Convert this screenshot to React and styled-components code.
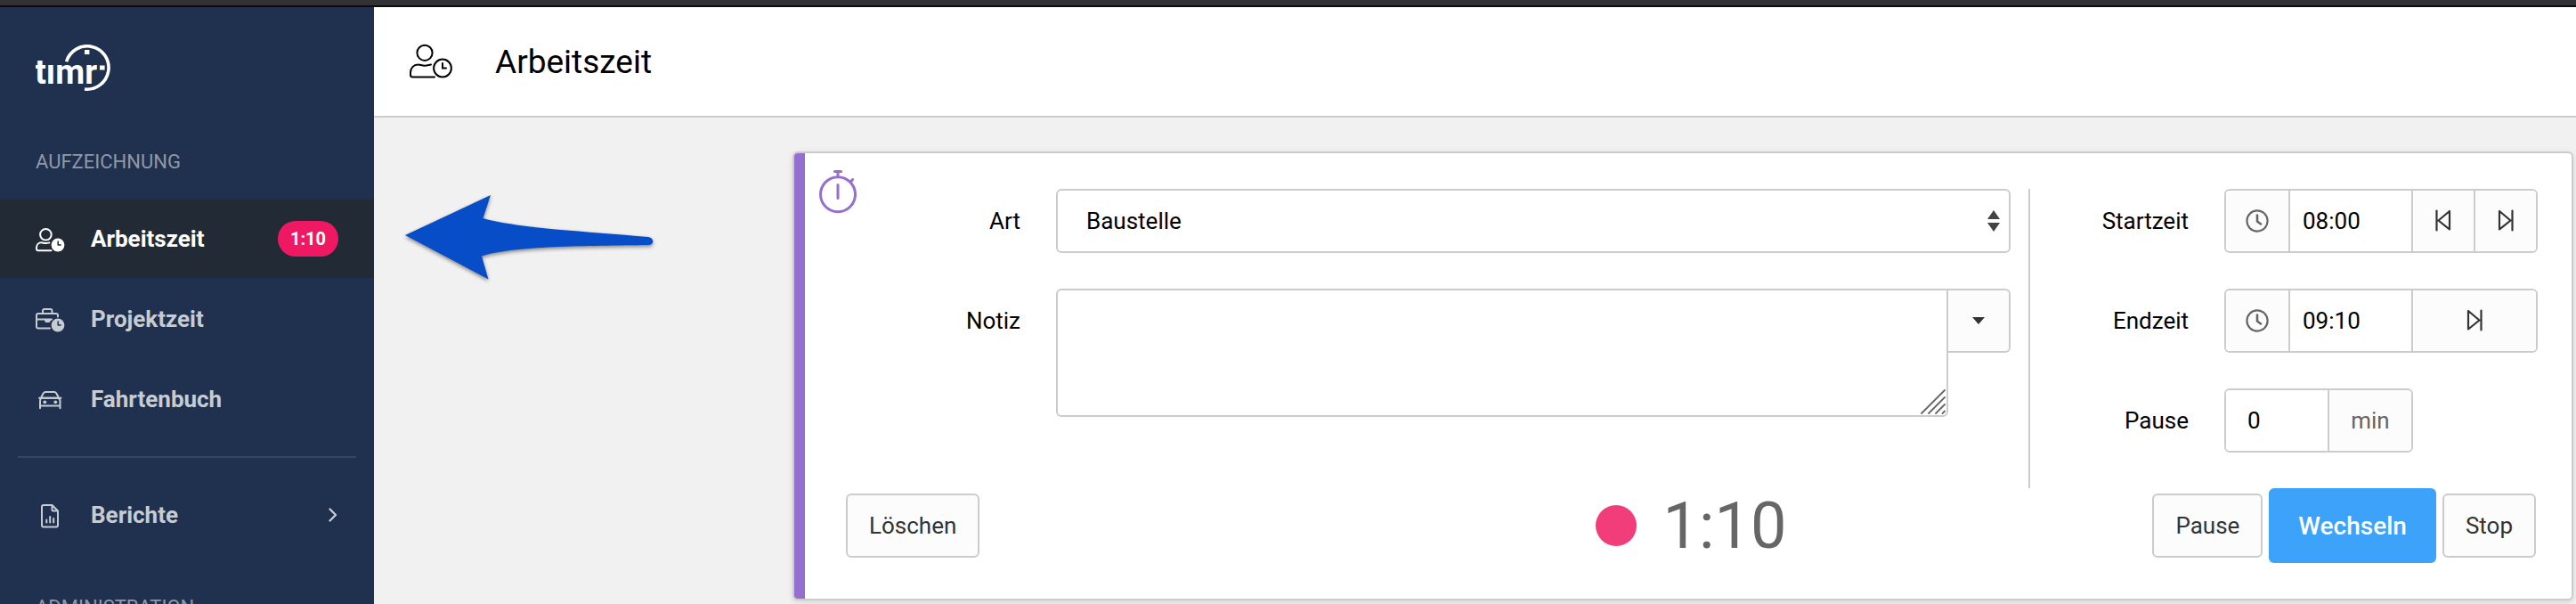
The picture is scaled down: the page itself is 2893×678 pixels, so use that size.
import React, { useState } from 'react';
import styled, { createGlobalStyle } from 'styled-components';

const GlobalStyle = createGlobalStyle`
  * {
    box-sizing: border-box;
  }
  body {
    margin: 0;
    font-family: Roboto, sans-serif;
    font-size: 26px;
    color: #000;
    background: #f1f1f1;
  }
  button, input, select, textarea {
    font: inherit;
    margin: 0;
  }
  svg {
    display: block;
    flex: none;
  }
`;

const Shell = styled.div`
  display: flex;
  flex-direction: column;
  height: 100vh;
  overflow: hidden;
`;

const TopBar = styled.div`
  flex: none;
  height: 8px;
  background: #323234;
  border-bottom: 2px solid #0b0b0c;
`;

const Columns = styled.div`
  display: flex;
  flex: 1;
  min-height: 0;
`;

/* sidebar */

const Sidebar = styled.nav`
  flex: none;
  width: 420px;
  padding-top: 42px;
  overflow: hidden;
  background: #1f314f;
`;

const LogoLink = styled.a`
  display: block;
  margin: 0 40px 20px;
`;

const LogoText = styled.text`
  font-family: Roboto, sans-serif;
  font-size: 38px;
  font-weight: 700;
  fill: #fff;
`;

const SectionTitle = styled.h2`
  margin: 0;
  padding: 47px 40px 29px;
  font-size: 22px;
  line-height: 26px;
  font-weight: 400;
  color: #8f98a7;
`;

const Menu = styled.ul`
  display: flex;
  flex-direction: column;
  gap: 2px;
  margin: 0;
  padding: 0;
  list-style: none;
`;

const MenuLink = styled.a`
  display: flex;
  align-items: center;
  height: 88px;
  padding: 0 40px;
  font-weight: 700;
  text-decoration: none;
  color: ${props => (props.$active ? '#fff' : '#c7cbd2')};
  background: ${props => (props.$active ? '#222b35' : 'transparent')};
`;

const MenuText = styled.span`
  flex: 1;
  margin-left: 29px;
`;

const Badge = styled.span`
  width: 68px;
  border-radius: 20px;
  background: #ef1862;
  color: #fff;
  font-size: 20px;
  line-height: 40px;
  text-align: center;
`;

const Separator = styled.hr`
  height: 2px;
  margin: 20px;
  border: 0;
  background: #364860;
`;

/* main area */

const Main = styled.main`
  flex: 1;
  min-width: 0;
`;

const Header = styled.header`
  display: flex;
  align-items: center;
  gap: 48px;
  height: 124px;
  padding: 0 40px;
  background: #fff;
  border-bottom: 2px solid #ccc;
`;

const Title = styled.h1`
  margin: 0;
  font-size: 37px;
  font-weight: 400;
`;

const Content = styled.div`
  position: relative;
  padding: 38px 3px 0 470px;
`;

const Arrow = styled.svg`
  position: absolute;
  left: 30px;
  top: 80px;
  filter: drop-shadow(0 2px 2px rgba(0, 0, 0, 0.45));
`;

const Card = styled.form`
  display: flex;
  overflow: hidden;
  border: 2px solid #ccc;
  border-radius: 6px;
  background: #fff;
  box-shadow: 0 2px 6px rgba(0, 0, 0, 0.12);
`;

const Stripe = styled.div`
  flex: none;
  width: 12px;
  background: #956fd0;
`;

const CardBody = styled.div`
  flex: 1;
  min-width: 0;
  padding: 18px 38px 40px 0;
`;

const Fields = styled.div`
  display: flex;
`;

const CardIcon = styled.div`
  width: 58px;
  padding-left: 14px;
`;

const FieldColumn = styled.div`
  display: grid;
  grid-template-columns: ${props => props.$columns};
  column-gap: 40px;
  row-gap: 40px;
  align-content: start;
  flex: ${props => (props.$grow ? 1 : 'none')};
  margin-top: 22px;
  padding-right: ${props => (props.$grow ? '20px' : 0)};
  padding-bottom: 40px;
  border-right: ${props => (props.$grow ? '2px solid #ccc' : 0)};
`;

const Label = styled.label`
  line-height: 72px;
  text-align: right;
`;

const SelectWrap = styled.div`
  position: relative;
`;

const Select = styled.select`
  display: block;
  width: 100%;
  height: 72px;
  padding: 0 32px;
  appearance: none;
  border: 2px solid #ccc;
  border-radius: 6px;
  background: #fff;
  color: #000;
`;

const SelectArrows = styled.svg`
  position: absolute;
  right: 11px;
  top: 24px;
  pointer-events: none;
`;

const NoteGroup = styled.div`
  display: flex;
  align-items: flex-start;
`;

const NoteWrap = styled.div`
  position: relative;
  flex: 1;
`;

const Note = styled.textarea`
  display: block;
  width: 100%;
  height: 144px;
  padding: 16px 32px;
  resize: none;
  border: 2px solid #ccc;
  border-radius: 6px 0 6px 6px;
  background: #fff;
`;

const Grip = styled.svg`
  position: absolute;
  right: 3px;
  bottom: 3px;
  pointer-events: none;
`;

/* a bordered row of add-ons, inputs and buttons, split by thin lines */
const Group = styled.div`
  display: flex;
  width: ${props => (props.$short ? '212px' : '352px')};
  height: 72px;
  overflow: hidden;
  border: 2px solid #ccc;
  border-radius: 6px;
  && > * + * {
    border-left: 2px solid #ccc;
  }
`;

const Addon = styled.span`
  display: flex;
  flex: none;
  align-items: center;
  justify-content: center;
  width: ${props => (props.$wide ? '94px' : '70px')};
  background: #fcfcfc;
  color: #666;
`;

const GroupInput = styled.input`
  flex: none;
  width: ${props => (props.$number ? '114px' : '138px')};
  padding: 0 ${props => (props.$number ? '24px' : '14px')};
  border: 0;
  border-radius: 0;
  background: #fff;
  color: #000;
`;

const GroupButton = styled.button`
  display: flex;
  flex: 1;
  align-items: center;
  justify-content: center;
  padding: 0;
  border: 0;
  background: #fcfcfc;
  color: #333;
`;

const NoteButton = styled.button`
  display: flex;
  align-items: center;
  justify-content: center;
  width: 70px;
  height: 72px;
  padding: 0;
  border: 2px solid #ccc;
  border-left: 0;
  border-radius: 0 6px 6px 0;
  background: #fcfcfc;
`;

const Footer = styled.div`
  display: grid;
  grid-template-columns: 1fr auto 1fr;
  align-items: center;
  padding: 0 2px 0 46px;
`;

const Actions = styled.div`
  display: flex;
  align-items: center;
  justify-content: ${props => (props.$end ? 'flex-end' : 'flex-start')};
  gap: 7px;
`;

const Button = styled.button`
  height: ${props => (props.$primary ? '84px' : '72px')};
  padding: ${props => (props.$primary ? '0 33px' : '0 24px')};
  border: ${props => (props.$primary ? 0 : '2px solid #ccc')};
  border-radius: 6px;
  background: ${props => (props.$primary ? '#3ca2fa' : '#fcfcfc')};
  color: ${props => (props.$primary ? '#fff' : '#333')};
  font-size: ${props => (props.$primary ? '28px' : '26px')};
  font-weight: ${props => (props.$primary ? 500 : 400)};
`;

const Timer = styled.div`
  display: flex;
  align-items: center;
  gap: 30px;
  height: 84px;
  font-size: 72px;
  color: #666;
`;

const RecordDot = styled.span`
  width: 46px;
  height: 46px;
  border-radius: 50%;
  background: #f13d7a;
`;

/* icons */

const Logo = () => (
  <svg width="84" height="52" viewBox="0 0 84 52" role="img" aria-label="timr">
    <path d="M34.6 19.2A24.2 24.2 0 1 1 55 50" fill="none" stroke="#fff" strokeWidth="3.6" />
    <path d="M55 6h5.4v5H55zM72 23.4h5.6v5.2H72z" fill="#fff" />
    <LogoText x="-1" y="44">tımr</LogoText>
  </svg>
);

const MenuIcon = ({ children }) => (
  <svg width="33" height="30" viewBox="0 0 33 30" fill="none" stroke="currentColor" strokeWidth="2" strokeLinecap="round" strokeLinejoin="round" aria-hidden="true">
    {children}
  </svg>
);

const ClockBadge = ({ back }) => (
  <>
    <circle cx="25" cy="22" r="7.4" fill="currentColor" stroke="none" />
    <path d="M25.2 18v4h3" stroke={back} strokeWidth="1.5" />
  </>
);

const UserClockIcon = () => (
  <MenuIcon>
    <circle cx="11.4" cy="10.3" r="6.3" />
    <path d="M17.5 28.2H3a2 2 0 0 1-2-2V25c0-3.5 2.5-5.7 5.5-5.7 1.8 0 2.8.8 4.9.8 1.5 0 2.6-.4 4-.7" />
    <ClockBadge back="#222b35" />
  </MenuIcon>
);

const BriefcaseIcon = () => (
  <MenuIcon>
    <path d="M16 25.5H3a2 2 0 0 1-2-2V11a2 2 0 0 1 2-2h20a2 2 0 0 1 2 2v1.5" />
    <path d="M8 9V6a2 2 0 0 1 2-2h6.5a2 2 0 0 1 2 2v3M1 15.5h17" />
    <path d="M9.5 15.5h8.5l-2.5 3.5h-4.5z" fill="currentColor" stroke="none" />
    <ClockBadge back="#1f314f" />
  </MenuIcon>
);

const CarIcon = () => (
  <MenuIcon>
    <path d="M4 13.7h24.5M6 13.5l2.7-5c.6-1 1.3-1.5 2.5-1.5h9.6c1.2 0 2 .5 2.5 1.5l2.7 5" />
    <path d="M5 25.2V17c0-2 1-3.3 3-3.3h16c2 0 3.5 1.3 3.5 3.3v8.2M5 22.5h22.5" />
    <circle cx="10.3" cy="18.3" r="1.9" fill="currentColor" stroke="none" />
    <circle cx="22.3" cy="18.3" r="1.9" fill="currentColor" stroke="none" />
  </MenuIcon>
);

const ReportIcon = () => (
  <MenuIcon>
    <path d="M18.5 4H9a2 2 0 0 0-2 2v20.5a2 2 0 0 0 2 2h14a2 2 0 0 0 2-2V10.5zM18.5 4v5a1.5 1.5 0 0 0 1.5 1.5h5" />
    <path d="M12.3 20.5v3M16.2 17v6.5M20.2 19v4.5" />
  </MenuIcon>
);

const ChevronIcon = () => (
  <svg width="12" height="18" viewBox="0 0 12 18" fill="none" stroke="currentColor" strokeWidth="2.4" strokeLinecap="round" strokeLinejoin="round" aria-hidden="true">
    <path d="M2.5 2.5L9 9l-6.5 6.5" />
  </svg>
);

const HeaderIcon = () => (
  <svg width="48" height="42" viewBox="0 0 48 42" fill="none" stroke="#000" strokeWidth="2" strokeLinecap="round" aria-hidden="true">
    <circle cx="17" cy="11.3" r="8.6" />
    <path d="M28 38.5H3.5A2.5 2.5 0 0 1 1 36V33.5c0-5 3.5-9 8.5-9 2.5 0 4 1.2 7.5 1.2s4.5-.9 7-1.2" />
    <circle cx="37" cy="28.5" r="9.9" />
    <path d="M37 23V28.5h4" />
  </svg>
);

const StopwatchIcon = () => (
  <svg width="44" height="52" viewBox="0 0 44 52" fill="none" stroke="#956fd0" strokeWidth="3" strokeLinecap="round" aria-hidden="true">
    <circle cx="23" cy="28.2" r="19.5" />
    <path d="M23 17.5v15M23 3.5v5M37.5 14l2-2.5" />
    <path d="M19.5 2.5h7" />
  </svg>
);

const ClockIcon = () => (
  <svg width="28" height="28" viewBox="0 0 28 28" fill="none" stroke="currentColor" strokeWidth="2.2" strokeLinecap="round" strokeLinejoin="round" aria-hidden="true">
    <circle cx="14" cy="14" r="11.6" />
    <path d="M14 7.5v7l4 3" strokeWidth="2.6" />
  </svg>
);

const SkipIcon = ({ back }) => (
  <svg width="18" height="26" viewBox="0 0 18 26" fill="none" stroke="currentColor" strokeWidth="2.2" strokeLinecap="round" strokeLinejoin="round" aria-hidden="true">
    {back
      ? <path d="M1.5 1.5v22M16 2v20.5L3.5 12.5z" />
      : <path d="M16.5 1.5v22M2 2v20.5L14.5 12.5z" />}
  </svg>
);

const TimeRow = ({ id, label, value, onChange, children }) => (
  <>
    <Label htmlFor={id}>{label}</Label>
    <Group>
      <Addon><ClockIcon /></Addon>
      <GroupInput id={id} type="text" value={value} onChange={e => onChange(e.target.value)} />
      {children}
    </Group>
  </>
);

const App = () => {
  const [note, setNote] = useState('');
  const [start, setStart] = useState('08:00');
  const [end, setEnd] = useState('09:10');
  const [pause, setPause] = useState('0');

  return (
    <Shell>
      <GlobalStyle />
      <TopBar />
      <Columns>
        <Sidebar>
          <LogoLink href="#"><Logo /></LogoLink>
          <SectionTitle>AUFZEICHNUNG</SectionTitle>
          <Menu>
            <li>
              <MenuLink href="#arbeitszeit" $active>
                <UserClockIcon />
                <MenuText>Arbeitszeit</MenuText>
                <Badge>1:10</Badge>
              </MenuLink>
            </li>
            <li>
              <MenuLink href="#projektzeit">
                <BriefcaseIcon />
                <MenuText>Projektzeit</MenuText>
              </MenuLink>
            </li>
            <li>
              <MenuLink href="#fahrtenbuch">
                <CarIcon />
                <MenuText>Fahrtenbuch</MenuText>
              </MenuLink>
            </li>
          </Menu>
          <Separator />
          <Menu>
            <li>
              <MenuLink href="#berichte">
                <ReportIcon />
                <MenuText>Berichte</MenuText>
                <ChevronIcon />
              </MenuLink>
            </li>
          </Menu>
          <SectionTitle>ADMINISTRATION</SectionTitle>
        </Sidebar>

        <Main>
          <Header>
            <HeaderIcon />
            <Title>Arbeitszeit</Title>
          </Header>
          <Content>
            <Arrow width="290" height="108" viewBox="450 212 290 108" aria-hidden="true">
              <path d="M455 264L551 219L542.5 245C580 256 660 260 728 266C735 267 735 275 728 275C660 276 575 276 541 287.5L548.5 313.5Z" fill="#074dc7" />
            </Arrow>
            <Card onSubmit={e => e.preventDefault()}>
              <Stripe />
              <CardBody>
                <Fields>
                  <CardIcon><StopwatchIcon /></CardIcon>
                  <FieldColumn $grow $columns="184px 1fr">
                    <Label htmlFor="art">Art</Label>
                    <SelectWrap>
                      <Select id="art" defaultValue="Baustelle">
                        <option>Baustelle</option>
                      </Select>
                      <SelectArrows width="16" height="24" viewBox="0 0 16 24" fill="#444" aria-hidden="true">
                        <path d="M8 0l7 10H1zM8 24L1 14h14z" />
                      </SelectArrows>
                    </SelectWrap>
                    <Label htmlFor="notiz">Notiz</Label>
                    <NoteGroup>
                      <NoteWrap>
                        <Note id="notiz" value={note} onChange={e => setNote(e.target.value)} />
                        <Grip width="28" height="28" viewBox="0 0 28 28" stroke="#666" strokeWidth="1.8" strokeLinecap="round" aria-hidden="true">
                          <path d="M1 27L27 1M9 27L27 9M17 27L27 17M24.5 27L27 24.5" />
                        </Grip>
                      </NoteWrap>
                      <NoteButton type="button" aria-label="Notiz auswählen">
                        <svg width="16" height="10" viewBox="0 0 16 10" aria-hidden="true">
                          <path d="M1 1h14l-7 8z" fill="#333" />
                        </svg>
                      </NoteButton>
                    </NoteGroup>
                  </FieldColumn>
                  <FieldColumn $columns="178px auto">
                    <TimeRow id="start" label="Startzeit" value={start} onChange={setStart}>
                      <GroupButton type="button" aria-label="Früher"><SkipIcon back /></GroupButton>
                      <GroupButton type="button" aria-label="Später"><SkipIcon /></GroupButton>
                    </TimeRow>
                    <TimeRow id="end" label="Endzeit" value={end} onChange={setEnd}>
                      <GroupButton type="button" aria-label="Später"><SkipIcon /></GroupButton>
                    </TimeRow>
                    <Label htmlFor="pause">Pause</Label>
                    <Group $short>
                      <GroupInput id="pause" type="text" $number value={pause} onChange={e => setPause(e.target.value)} />
                      <Addon $wide>min</Addon>
                    </Group>
                  </FieldColumn>
                </Fields>
                <Footer>
                  <Actions>
                    <Button type="button">Löschen</Button>
                  </Actions>
                  <Timer>
                    <RecordDot />
                    <span>1:10</span>
                  </Timer>
                  <Actions $end>
                    <Button type="button">Pause</Button>
                    <Button type="submit" $primary>Wechseln</Button>
                    <Button type="button">Stop</Button>
                  </Actions>
                </Footer>
              </CardBody>
            </Card>
          </Content>
        </Main>
      </Columns>
    </Shell>
  );
};

export default App;
